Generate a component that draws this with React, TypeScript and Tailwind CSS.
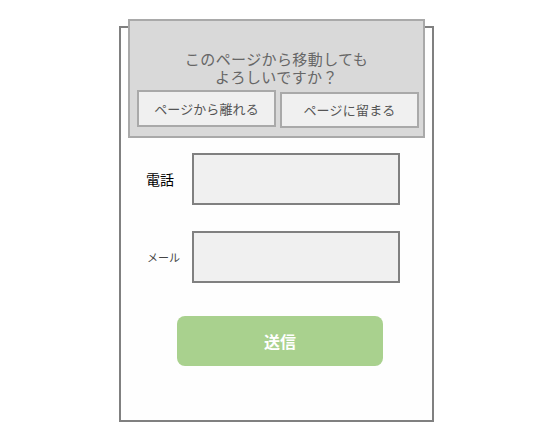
import React from "react";

const font = { fontFamily: '"Noto Sans CJK JP", "Noto Sans", sans-serif' };

export default function App() {
  return (
    <div className="w-[553px] h-[431px] bg-white" style={font}>
      <div className="pt-[26px]">
        <div className="relative mx-auto w-[315px] h-[396px] border-2 border-[#808080] bg-[#fefefe]">
          {/* dialog */}
          <div className="absolute left-[7px] top-[-9px] w-[297px] h-[119px] border-2 border-[#a9a9a9] bg-[#d9d9d9] flex flex-col">
            <p className="pt-[29px] h-[65px] text-center text-[15px] leading-[18px] tracking-[0.4px] text-[#666666]">
              このページから移動しても
              <br />
              よろしいですか？
            </p>
            <div className="flex items-start gap-[4px] pl-[7px] mt-[4px]">
              <button className="w-[139px] h-[37px] border-2 border-[#a9a9a9] bg-[#f0f0f0] text-[13px] tracking-[0.1px] text-[#555555] flex items-center justify-center">
                ページから離れる
              </button>
              <button className="mt-[2px] w-[139px] h-[36px] border-2 border-[#a9a9a9] bg-[#f0f0f0] text-[13px] tracking-[0.2px] text-[#555555] flex items-center justify-center">
                ページに留まる
              </button>
            </div>
          </div>

          {/* form */}
          <div className="pt-[125px] pl-[25px] flex flex-col gap-[26px]">
            <div className="flex items-center">
              <div className="w-[46px] text-[14px] text-black">電話</div>
              <div className="w-[208px] h-[52px] border-2 border-[#808080] bg-[#f0f0f0]" />
            </div>
            <div className="flex items-center">
              <div className="w-[46px] pl-[1px] text-[11px] text-[#444444]">メール</div>
              <div className="w-[208px] h-[52px] border-2 border-[#808080] bg-[#f0f0f0]" />
            </div>
          </div>

          <div className="mt-[33px] ml-[56px]">
            <button className="w-[206px] h-[50px] rounded-[8px] bg-[#a9d18e] text-white font-bold text-[16px] flex items-center justify-center">
              送信
            </button>
          </div>
        </div>
      </div>
    </div>
  );
}
